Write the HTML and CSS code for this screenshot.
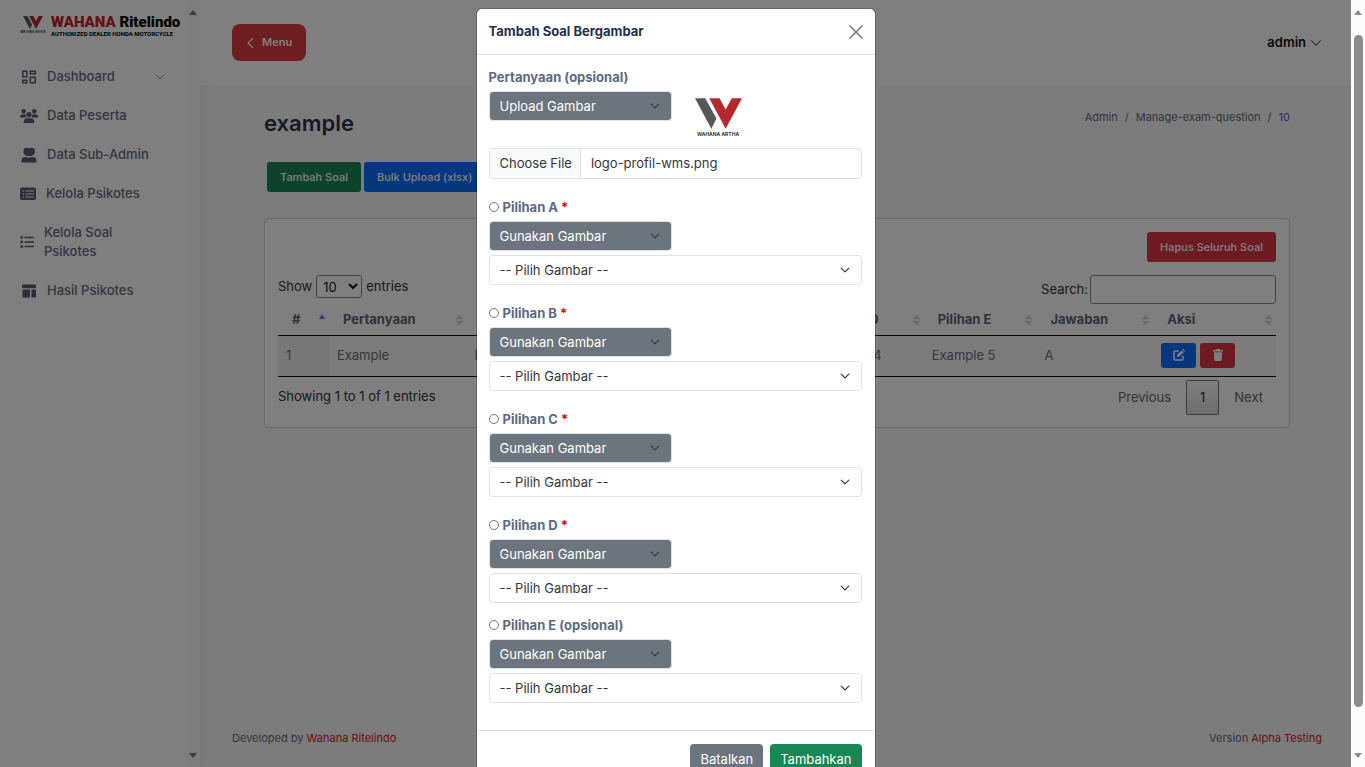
FILE: index.html
```
<!DOCTYPE html>
<html lang="id">
<head>
<meta charset="utf-8">
<title>Tambah Soal Bergambar</title>
<link rel="stylesheet" href="styles.css">
</head>
<body>
<svg class="defs" aria-hidden="true">
  <symbol id="i-w" viewBox="0 0 46 30"><path fill="#55565a" d="M0 0h10l11 20-5 10z"/><path fill="#b4282e" d="M14 0h10l6 11 6-11h10L30 30z"/></symbol>
  <symbol id="i-chev" viewBox="0 0 16 16"><path fill="none" stroke="currentColor" stroke-linecap="round" stroke-linejoin="round" d="M2 5l6 6 6-6"/></symbol>
  <symbol id="i-sort" viewBox="0 0 8 12"><path d="M4 0l4 5H0zM4 12l4-5H0z" fill="#d0d0d0"/></symbol>
</svg>
<div class="window">
  <div class="viewport">
    <div class="app">
      <aside class="sidebar">
        <div class="sidebar-body">
          <a class="brand" href="#">
            <span class="brand-mark"><svg width="20" height="13"><use href="#i-w"/></svg><small>WAHANA ARTHA</small></span>
            <span class="brand-text"><b><i>WAHANA</i> Ritelindo</b><small>AUTHORIZED DEALER HONDA MOTORCYCLE</small></span>
          </a>
          <nav class="nav">
            <a href="#"><svg width="18" height="16" viewBox="0 0 18 16"><path fill="none" stroke="currentColor" stroke-width="1.5" d="M2.8 2.3h4v5.4h-4zM10.3 2.3h4.9v2.4h-4.9zM2.8 11.2h4v2.5h-4zM10.3 8.3h4.9v5.4h-4.9z"/></svg><span>Dashboard</span><svg class="caret" width="10" height="10"><use href="#i-chev"/></svg></a>
            <a href="#"><svg width="18" height="16" viewBox="0 0 18 16" fill="currentColor"><circle cx="3.7" cy="3.2" r="2.2"/><circle cx="14.3" cy="3.2" r="2.2"/><circle cx="9" cy="6.6" r="2.6"/><path d="M0 9.2c0-2 1-3 3-3h1.5c.7 0 1 .2 1.2.4-.1 1.3.3 2.2 1 2.9H0zM18 9.2c0-2-1-3-3-3h-1.500c-.7 0-1 .2-1.200.4.1 1.300-.3 2.200-1 2.900H18zM3.600 15c0-3 1.200-4.700 3.400-4.700h4c2.200 0 3.400 1.700 3.400 4.700z"/></svg><span>Data Peserta</span></a>
            <a href="#"><svg width="18" height="16" viewBox="0 0 18 16" fill="currentColor"><path d="M3.500 4.500C3.500 1.800 4.500.8 6.500.8c1 0 1.800.4 2.500.4s1.500-.4 2.500-.4c2 0 3.400 1 3.400 3.700 0 2.400-1.600 4.600-5.900 4.600S3.500 6.900 3.500 4.500zM1.500 15.500v-2.400c0-2 1.800-3 4-3 1.200.6 5.800.6 7 0 2.200 0 4 1 4 3v2.400z"/></svg><span>Data Sub-Admin</span></a>
            <a href="#"><svg width="17" height="16" viewBox="0 0 17 16"><rect x="0" y="1.500" width="16" height="12.500" rx="1.800" fill="currentColor"/><path class="icon-cut" d="M2.500 5h1.500M2.500 8h1.500M2.500 11h1.500M5.500 5H14M5.500 8H14M5.500 11H14"/></svg><span>Kelola Psikotes</span></a>
            <a href="#"><svg width="15" height="16" viewBox="0 0 15 16"><path fill="none" stroke="currentColor" stroke-width="2.400" d="M.5 3.500h2.400M.5 8h2.400M.5 12.500h2.400"/><path stroke="currentColor" stroke-width="1.500" d="M4.500 3.500H14M4.500 8H14M4.500 12.500H14"/></svg><span>Kelola Soal Psikotes</span></a>
            <a href="#"><svg width="18" height="16" viewBox="0 0 18 16" fill="currentColor"><rect x="2" y="1.500" width="14" height="3.800" rx="1"/><rect x="2.500" y="6.500" width="7.500" height="8" rx="1"/><rect x="11.500" y="6.500" width="4.500" height="8" rx="1"/></svg><span>Hasil Psikotes</span></a>
          </nav>
        </div>
        <div class="sidebar-scroll"><i class="tri up"></i><i class="tri down"></i></div>
      </aside>
      <div class="page">
        <header class="topbar">
          <button class="menu-btn" type="button"><svg width="10" height="12" viewBox="0 0 10 12"><path fill="none" stroke="currentColor" stroke-width="1.200" stroke-linecap="round" d="M6.500 1.500L2 6l4.500 4.500"/></svg>Menu</button>
          <a class="user" href="#">admin <svg width="12" height="12"><use href="#i-chev"/></svg></a>
        </header>
        <main class="content">
          <div class="heading">
            <h1>example</h1>
            <nav class="crumbs"><a href="#">Admin</a><span>/</span><a href="#">Manage-exam-question</a><span>/</span><a class="current" href="#">10</a></nav>
          </div>
          <div class="actions">
            <button class="btn green" type="button">Tambah Soal</button>
            <button class="btn blue" type="button">Bulk Upload (xlsx)</button>
          </div>
          <section class="card">
            <div class="card-top"><button class="btn red" type="button">Hapus Seluruh Soal</button></div>
            <div class="controls">
              <label class="length">Show <select><option>10</option></select> entries</label>
              <label class="search">Search:<input type="search"></label>
            </div>
            <table>
              <colgroup><col class="c1"><col class="c2"><col class="c3"><col class="c3"><col class="c3"><col class="c3"><col class="c4"><col class="c5"><col class="c6"></colgroup>
              <thead><tr>
                <th class="asc"><div>#<i></i></div></th>
                <th><div>Pertanyaan<svg width="7" height="12"><use href="#i-sort"/></svg></div></th>
                <th><div>Pilihan A<svg width="7" height="12"><use href="#i-sort"/></svg></div></th>
                <th><div>Pilihan B<svg width="7" height="12"><use href="#i-sort"/></svg></div></th>
                <th><div>Pilihan C<svg width="7" height="12"><use href="#i-sort"/></svg></div></th>
                <th><div>Pilihan D<svg width="7" height="12"><use href="#i-sort"/></svg></div></th>
                <th><div>Pilihan E<svg width="7" height="12"><use href="#i-sort"/></svg></div></th>
                <th><div>Jawaban<svg width="7" height="12"><use href="#i-sort"/></svg></div></th>
                <th><div>Aksi<svg width="7" height="12"><use href="#i-sort"/></svg></div></th>
              </tr></thead>
              <tbody><tr>
                <td class="sorted">1</td><td>Example</td><td>Example 1</td><td>Example 2</td><td>Example 3</td><td>Example 4</td><td>Example 5</td><td>A</td>
                <td><div class="row-actions">
                  <button class="icon-btn blue" type="button" aria-label="Edit"><svg width="12" height="12" viewBox="0 0 12 12"><path fill="none" stroke="currentColor" stroke-width="1.500" stroke-linecap="round" d="M5.200 2H2.200Q1 2 1 3.200V9.800Q1 11 2.200 11H8.800Q10 11 10 9.800V7.500"/><path fill="currentColor" d="M4 8l.4-2.400L8.600 1.400l2 2L6.400 7.600zM9.200.8l.5-.5q.4-.4.8 0l1.200 1.200q.4.4 0 .8l-.5.5z"/></svg></button>
                  <button class="icon-btn red" type="button" aria-label="Hapus"><svg width="12" height="12" viewBox="0 0 12 12" fill="currentColor"><path d="M1 1h3l.6-1h2.800L8 1h3v1.400H1zM1.800 3.200h8.400l-.5 7.600q-.1 1.200-1.200 1.200h-5q-1.100 0-1.200-1.200z"/></svg></button>
                </div></td>
              </tr></tbody>
            </table>
            <div class="table-foot">
              <span>Showing 1 to 1 of 1 entries</span>
              <div class="pager"><a href="#">Previous</a><a class="active" href="#">1</a><a href="#">Next</a></div>
            </div>
          </section>
        </main>
        <footer class="footer"><span>Developed by <a href="#">Wahana Ritelindo</a></span><span>Version <a href="#">Alpha Testing</a></span></footer>
      </div>
    </div>
    <div class="backdrop">
      <form class="modal" role="dialog" aria-labelledby="modal-title">
        <header class="modal-head">
          <h2 id="modal-title">Tambah Soal Bergambar</h2>
          <button class="close" type="button" aria-label="Tutup"><svg width="14" height="14" viewBox="0 0 14 14"><path stroke="currentColor" stroke-width="1.500" stroke-linecap="round" d="M1 1l12 12M13 1L1 13"/></svg></button>
        </header>
        <div class="modal-body">
          <div class="question">
            <label class="field-label" for="q-mode">Pertanyaan (opsional)</label>
            <div class="question-row">
              <div class="picker mode"><select id="q-mode"><option>Upload Gambar</option></select><svg width="10" height="10"><use href="#i-chev"/></svg></div>
              <div class="preview"><svg width="47" height="31"><use href="#i-w"/></svg><small>WAHANA ARTHA</small></div>
            </div>
            <input class="file" id="q-file" type="file" aria-label="Gambar pertanyaan">
          </div>
          <div class="option">
            <label class="field-label"><input type="radio" name="answer"><span>Pilihan A <em>*</em></span></label>
            <div class="picker mode"><select aria-label="Jenis pilihan A"><option>Gunakan Gambar</option></select><svg width="10" height="10"><use href="#i-chev"/></svg></div>
            <div class="picker"><select aria-label="Gambar A"><option>-- Pilih Gambar --</option></select><svg width="10" height="10"><use href="#i-chev"/></svg></div>
          </div>
          <div class="option">
            <label class="field-label"><input type="radio" name="answer"><span>Pilihan B <em>*</em></span></label>
            <div class="picker mode"><select aria-label="Jenis pilihan B"><option>Gunakan Gambar</option></select><svg width="10" height="10"><use href="#i-chev"/></svg></div>
            <div class="picker"><select aria-label="Gambar B"><option>-- Pilih Gambar --</option></select><svg width="10" height="10"><use href="#i-chev"/></svg></div>
          </div>
          <div class="option">
            <label class="field-label"><input type="radio" name="answer"><span>Pilihan C <em>*</em></span></label>
            <div class="picker mode"><select aria-label="Jenis pilihan C"><option>Gunakan Gambar</option></select><svg width="10" height="10"><use href="#i-chev"/></svg></div>
            <div class="picker"><select aria-label="Gambar C"><option>-- Pilih Gambar --</option></select><svg width="10" height="10"><use href="#i-chev"/></svg></div>
          </div>
          <div class="option last-required">
            <label class="field-label"><input type="radio" name="answer"><span>Pilihan D <em>*</em></span></label>
            <div class="picker mode"><select aria-label="Jenis pilihan D"><option>Gunakan Gambar</option></select><svg width="10" height="10"><use href="#i-chev"/></svg></div>
            <div class="picker"><select aria-label="Gambar D"><option>-- Pilih Gambar --</option></select><svg width="10" height="10"><use href="#i-chev"/></svg></div>
          </div>
          <div class="option">
            <label class="field-label"><input type="radio" name="answer"><span>Pilihan E (opsional)</span></label>
            <div class="picker mode"><select aria-label="Jenis pilihan E"><option>Gunakan Gambar</option></select><svg width="10" height="10"><use href="#i-chev"/></svg></div>
            <div class="picker"><select aria-label="Gambar E"><option>-- Pilih Gambar --</option></select><svg width="10" height="10"><use href="#i-chev"/></svg></div>
          </div>
        </div>
        <footer class="modal-foot">
          <button class="grey" type="button">Batalkan</button>
          <button class="green" type="submit">Tambahkan</button>
        </footer>
      </form>
    </div>
  </div>
  <div class="page-scroll"><i class="tri up"></i><div class="thumb"></div><i class="tri down"></i></div>
</div>
<script src="app.js"></script>
</body>
</html>
```
FILE: styles.css
```
* { box-sizing: border-box; }
body { margin: 0; font-family: Inter, "Liberation Sans", sans-serif; font-size: 13px; line-height: 19px; color: #687086; }
a { color: inherit; text-decoration: none; }
button, input, select { font: inherit; margin: 0; }
i, em { font-style: normal; }
svg { stroke-width: 1.3; }
.defs { position: absolute; width: 0; height: 0; }
.window { display: flex; height: 100vh; overflow: hidden; }
.viewport { position: relative; flex: 1; min-width: 0; overflow: hidden; }
.app { display: flex; height: 100%; background: #f8f8f8; }

.sidebar { display: flex; width: 200px; flex: none; background: #fff; box-shadow: 0 0 18px rgba(0, 40, 20, .06); }
.sidebar-body { flex: 1; min-width: 0; padding: 13px 5px 0 20px; }
.sidebar-scroll { width: 15px; background: #fbfbfb; display: flex; flex-direction: column; align-items: center; justify-content: space-between; padding: 10px 0 9px; }
.tri { width: 0; height: 0; border: 4px solid transparent; }
.tri.up { border-top: 0; border-bottom: 5px solid #7a7a7a; }
.tri.down { border-bottom: 0; border-top: 5px solid #7a7a7a; }
.brand { display: flex; gap: 5px; height: 24px; }
.brand-mark { display: flex; flex-direction: column; align-items: center; width: 26px; flex: none; padding-top: 3px; gap: 1px; }
.brand-mark small { font-size: 3px; line-height: 4px; color: #222; white-space: nowrap; font-weight: 600; }
.brand-text { display: flex; flex-direction: column; white-space: nowrap; color: #000; font-family: Roboto, Inter, sans-serif; }
.brand-text b { font-size: 15px; line-height: 18px; font-weight: 900; }
.brand-text i { color: #c8202c; }
.brand-text small { font-size: 6px; line-height: 6px; font-weight: 700; }
.nav { display: flex; flex-direction: column; margin-top: 20px; font-size: 13px; font-weight: 500; color: #666c84; }
.nav a { display: flex; align-items: center; gap: 9px; padding: 10px 15px 10px 0; }
.nav svg { flex: none; color: #565d78; }
.nav span { flex: 1; }
.nav .caret { color: #666c84; }
.icon-cut { stroke: #fff; stroke-width: 1.2; }

.page { flex: 1; min-width: 0; display: flex; flex-direction: column; }
.topbar { height: 85px; background: #fff; display: flex; justify-content: space-between; align-items: center; padding: 0 29px 0 32px; }
.menu-btn { display: flex; align-items: center; gap: 6px; height: 37px; padding: 0 14px; border: 0; border-radius: 8px; background: #dc3a40; color: #fff; font-size: 11px; font-weight: 600; }
.user { display: flex; align-items: center; gap: 4px; color: #111; font-weight: 600; }
.content { flex: 1; padding: 24px 61px 0 64px; }
.heading { display: flex; justify-content: space-between; align-items: flex-start; }
.heading h1 { margin: 0; font-size: 22px; line-height: 28px; font-weight: 600; color: #2a3250; }
.crumbs { display: flex; gap: 7px; font-size: 11px; line-height: 16px; color: #666c80; }
.crumbs .current { color: #5a5ad8; }
.actions { display: flex; gap: 3px; padding: 25px 3px 0; }
.btn { height: 30px; border: 0; border-radius: 3px; padding: 0 13px; color: #fff; font-size: 11px; font-weight: 500; white-space: nowrap; }
.green { background: #198754; }
.blue { background: #0d6efd; }
.red { background: #dc3545; }
.grey { background: #6c757d; }
.card { margin-top: 26px; padding: 13px 13px 12px; border: 1px solid #d2d2d2; border-radius: 4px; background: #fff; }
.card-top { display: flex; justify-content: flex-end; }
.controls { display: flex; justify-content: space-between; align-items: flex-end; margin-top: 13px; color: #333; }
.length { display: flex; align-items: center; gap: 4px; padding-bottom: 6px; }
.length select { height: 23px; width: 46px; border: 1px solid #8a8a8a; border-radius: 3px; background: transparent; color: #111; padding: 0 2px; }
.search { display: flex; align-items: center; gap: 2px; }
.search input { width: 186px; height: 29px; border: 1px solid #8a8a8a; border-radius: 3px; background: transparent; }
table { width: 100%; table-layout: fixed; border-collapse: collapse; border-bottom: 1px solid #111; }
.c1 { width: 5.1%; } .c2 { width: 13.8%; } .c3 { width: 11.45%; } .c4 { width: 11.3%; } .c5 { width: 11.7%; } .c6 { width: 12.3%; }
th { padding: 6px 4px 6px 14px; text-align: left; font-weight: 700; color: #5d6580; border-bottom: 1px solid #111; }
th div { display: flex; align-items: center; justify-content: space-between; }
.asc i { width: 0; height: 0; border: 3px solid transparent; border-top: 0; border-bottom: 5px solid #7878e0; margin-bottom: 6px; }
td { padding: 5px 8px 7px; height: 41px; background: #f9f9f9; }
.sorted { background: #f1f1f1; }
.row-actions { display: flex; gap: 4px; }
.icon-btn { display: flex; align-items: center; justify-content: center; width: 35px; height: 25px; border: 0; border-radius: 3px; color: #fff; padding: 0; }
.table-foot { display: flex; justify-content: space-between; align-items: flex-start; padding-top: 3px; color: #333; }
.table-foot > span { padding-top: 7px; }
.pager { display: flex; align-items: center; gap: 2px; color: #666; }
.pager a { padding: 7px 13px; }
.pager .active { border: 1px solid #777; border-radius: 2px; background: linear-gradient(#fff, #dcdcdc); color: #333; }
.footer { display: flex; justify-content: space-between; padding: 0 29px 20px 32px; font-size: 11px; line-height: 18px; color: #666c80; }
.footer a { color: #d81818; }

.backdrop { position: absolute; inset: 0; background: rgba(0, 0, 0, .5); display: flex; justify-content: center; align-items: flex-start; padding-top: 8px; overflow: hidden; }
.modal { width: 400px; max-width: 100%; background: #fff; background-clip: padding-box; border: 1px solid rgba(0, 0, 0, .2); border-radius: 6px; color: #33373d; }
.modal-head { display: flex; justify-content: space-between; align-items: center; height: 46px; padding: 0 12px; border-bottom: 1px solid #dee2e6; }
.modal-head h2 { margin: 0; font-size: 13px; font-weight: 700; color: #25304a; }
.close { border: 0; background: none; padding: 0; display: flex; color: #777; }
.modal-body { display: flex; flex-direction: column; padding: 12px 13px 27px 12px; }
.field-label { display: flex; align-items: center; gap: 4px; height: 20px; font-weight: 700; color: #5f6882; }
.field-label input { width: 10px; height: 10px; }
.field-label em { color: #e00; }
.question-row { display: flex; align-items: flex-start; gap: 23px; margin-top: 4px; }
.preview { display: flex; flex-direction: column; align-items: center; padding: 7px 0 11px; gap: 3px; color: #111; }
.preview small { font-size: 5px; line-height: 5px; font-weight: 600; white-space: nowrap; }
.file { display: block; width: 100%; height: 31px; padding: 5px 10px; border: 1px solid #dee2e6; border-radius: 4px; background: #fff; color: #33373d; overflow: hidden; }
.file::file-selector-button { height: 29px; margin: -5px 10px -5px -10px; padding: 0 8px 0 10px; border: 0; border-right: 1px solid #dee2e6; background: #f8f9fa; color: #33373d; font: inherit; }
.option { display: flex; flex-direction: column; gap: 4px; margin-top: 18px; }
.last-required + .option { margin-top: 12px; }
.picker { display: grid; grid-template-columns: 1fr; align-items: center; }
.picker select, .picker svg { grid-area: 1 / 1; }
.picker select { appearance: none; width: 100%; height: 30px; padding: 0 30px 0 10px; border: 1px solid #dee2e6; border-radius: 4px; background: #fff; color: #33373d; }
.picker svg { justify-self: end; margin-right: 12px; pointer-events: none; stroke-width: 2; color: #343a40; }
.picker.mode { width: 183px; }
.picker.mode select { background: #6c757d; color: #fff; }
.modal-foot { display: flex; justify-content: flex-end; gap: 7px; padding: 13px; border-top: 1px solid #dee2e6; }
.modal-foot button { height: 30px; padding: 0 10px; border: 0; border-radius: 4px; color: #fff; }

.page-scroll { width: 14px; flex: none; background: #fcfcfc; display: flex; flex-direction: column; align-items: center; padding: 10px 0 9px; }
.page-scroll .tri { border-bottom-color: #8b8b8b; }
.page-scroll .tri.down { border-top-color: #8b8b8b; }
.page-scroll .thumb { width: 9px; flex: 1; margin: 20px 0 46px; border-radius: 5px; background: #8b8b8b; }
```
FILE: app.js
```
const files = new DataTransfer();
files.items.add(new File([""], "logo-profil-wms.png", { type: "image/png" }));
document.getElementById("q-file").files = files.files;
```
